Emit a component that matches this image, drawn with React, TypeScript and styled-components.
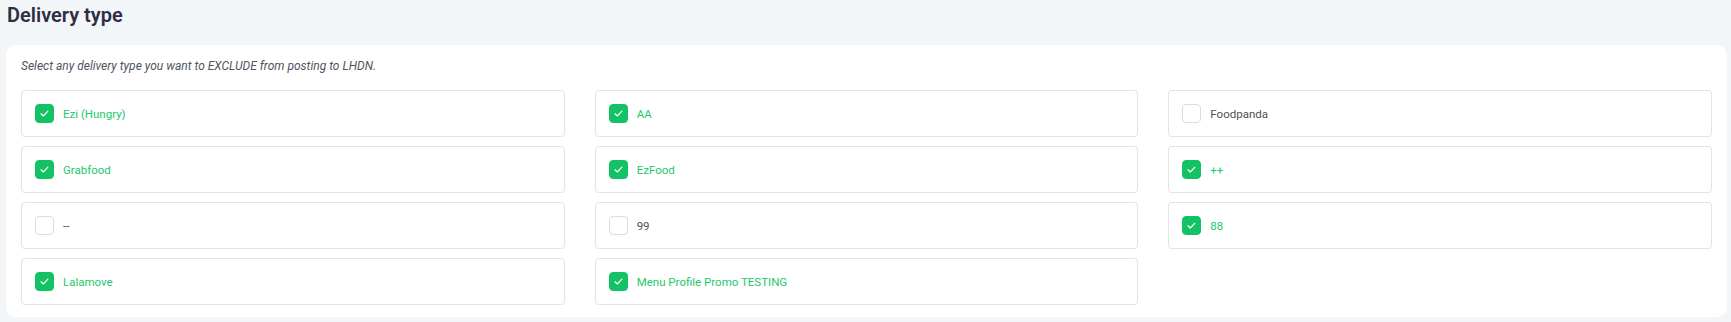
import React from 'react'
import styled, { createGlobalStyle } from 'styled-components'

const GlobalStyle = createGlobalStyle`
    body {
        margin: 0;
        background: #f3f6f8;
        font-family: Roboto, 'Liberation Sans', sans-serif;
    }
`

const Page = styled.div`
    padding: 3px 4px 5px 6px;
`

const Title = styled.h2`
    margin: 0 0 17px 1px;
    font-size: 20px;
    line-height: 25px;
    font-weight: 600;
    color: #2f2c45;
`

const Card = styled.section`
    background: #fff;
    border-radius: 10px;
    padding: 12px 15px 12px 15px;
`

const Hint = styled.p`
    margin: 0 0 14px 0;
    font-size: 12px;
    line-height: 19px;
    font-style: italic;
    color: #4f5560;
`

const Grid = styled.div`
    display: grid;
    grid-template-columns: repeat(3, 1fr);
    column-gap: 30px;
    row-gap: 9px;
`

const Option = styled.label<{ checked: boolean }>`
    display: flex;
    align-items: center;
    gap: 9px;
    height: 47px;
    box-sizing: border-box;
    padding: 0 13px;
    border: 1px solid #e1e3e6;
    border-radius: 4px;
    box-shadow: 0 0 1px rgba(0, 0, 0, 0.06);
    font-size: 11.5px;
    color: ${({ checked }) => (checked ? '#22c96a' : '#4d5058')};
    cursor: pointer;
`

const Box = styled.span<{ checked: boolean }>`
    width: 19px;
    height: 19px;
    box-sizing: border-box;
    border-radius: 4px;
    display: flex;
    align-items: center;
    justify-content: center;
    background: ${({ checked }) => (checked ? '#13c265' : '#fff')};
    border: 1px solid ${({ checked }) => (checked ? '#13c265' : '#d9dce1')};
`

const options = [
    { name: 'Ezi (Hungry)', checked: true },
    { name: 'AA', checked: true },
    { name: 'Foodpanda', checked: false },
    { name: 'Grabfood', checked: true },
    { name: 'EzFood', checked: true },
    { name: '++', checked: true },
    { name: '--', checked: false },
    { name: '99', checked: false },
    { name: '88', checked: true },
    { name: 'Lalamove', checked: true },
    { name: 'Menu Profile Promo TESTING', checked: true },
]

const Check = () => (
    <svg width="11" height="11" viewBox="0 0 12 12" fill="none">
        <path d="M2.2 6.3l2.5 2.4 5-5.2" stroke="#fff" strokeWidth="1.3" strokeLinecap="round" strokeLinejoin="round" />
    </svg>
)

const App = () => {
    return (
        <Page>
            <GlobalStyle />
            <Title>Delivery type</Title>
            <Card>
                <Hint>Select any delivery type you want to EXCLUDE from posting to LHDN.</Hint>
                <Grid>
                    {options.map(opt => (
                        <Option key={opt.name} checked={opt.checked}>
                            <Box checked={opt.checked}>{opt.checked && <Check />}</Box>
                            {opt.name}
                        </Option>
                    ))}
                </Grid>
            </Card>
        </Page>
    )
}

export default App
